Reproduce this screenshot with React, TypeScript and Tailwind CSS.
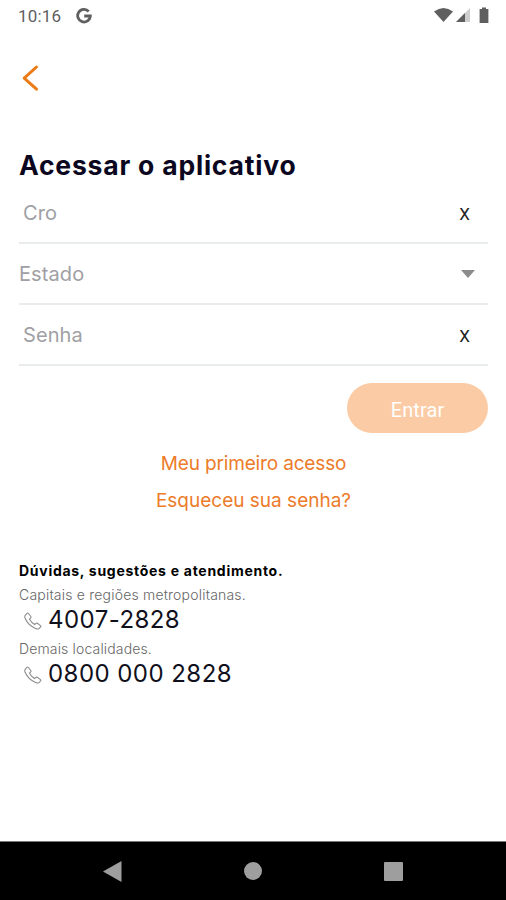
import type { ReactNode } from "react";

function StatusBar() {
  return (
    <header className="flex h-8 items-center justify-between pl-[18px] pr-[16px] text-[#5f5f5f]">
      <div className="flex items-center">
        <span className="w-[58px] font-['Roboto',sans-serif] text-[17px] leading-8 tracking-[0.2px]">10:16</span>
        <svg width="16" height="16" viewBox="0 0 16 16" fill="none" stroke="currentColor" strokeWidth="2.8">
          <path d="M12.7 3.5A6.3 6.3 0 1 0 14.3 8H8.2" />
        </svg>
      </div>
      <svg width="56" height="18" viewBox="0 0 56 18" fill="currentColor">
        <path d="M0 4.5Q9.5-2.5 19 4.5L9.5 15Z" />
        <path d="M36 1V15H22Z" fill="#cfcfcf" />
        <path d="M31 6V15H22Z" />
        <path d="M48 .5h4v1.5h2.4V16h-8.8V2H48Z" />
      </svg>
    </header>
  );
}

function Field({ label, inset, children }: { label: string; inset?: boolean; children: ReactNode }) {
  return (
    <div className="flex h-[61px] items-center justify-between border-b-2 border-[#e9ecec]">
      <span className={inset ? "pl-1 tracking-[0.1px]" : "tracking-[0.1px]"}>{label}</span>
      {children}
    </div>
  );
}

function Clear() {
  return (
    <button aria-label="Limpar" className="mr-[18px] mt-[2px] font-['Roboto',sans-serif] text-[17px] leading-6 text-[#222]">
      X
    </button>
  );
}

function Phone({ number }: { number: string }) {
  return (
    <div className="flex h-[26px] items-center pl-[5px]">
      <svg className="mr-[6px] mt-[2px]" width="18" height="18" viewBox="0 0 18 18" fill="none" stroke="#8c8c8c" strokeWidth="1.1">
        <path d="M1.2 3.3L3 1.3Q3.7.7 4.4 1.5L6.8 4.5Q7.3 5.2 6.7 5.9L5.5 7.2Q7.2 10.4 10.7 12.5L12 11.4Q12.7 10.8 13.4 11.3L16.5 13.6Q17.2 14.2 16.6 14.9L15 16.6Q13.8 17.5 11.6 16.5Q4 13.2 1 6Q.5 4.2 1.2 3.3Z" />
      </svg>
      <span className="whitespace-nowrap text-[24px] leading-[26px] tracking-[0.45px] text-[#10101c]">{number}</span>
    </div>
  );
}

export default function App() {
  return (
    <div className="flex h-[900px] w-[506px] flex-col bg-white font-['Inter',sans-serif]">
      <StatusBar />
      <main className="flex flex-1 flex-col pl-[19px] pr-[18px]">
        <button aria-label="Voltar" className="ml-[3px] mt-[32px] h-7 w-[18px]">
          <svg width="18" height="28" viewBox="0 0 18 28" fill="none" stroke="#ec7b16" strokeWidth="3" strokeLinecap="round" strokeLinejoin="round">
            <path d="M14.5 3L2.2 14.2L14.5 25.2" />
          </svg>
        </button>
        <h1 className="mt-[57px] h-[34px] whitespace-nowrap text-[26.5px] font-bold leading-[33px] tracking-[0.8px] text-[#0b0720]">Acessar o aplicativo</h1>
        <form className="flex flex-col text-[20px] text-[#a0a0a4]">
          <Field label="Cro" inset><Clear /></Field>
          <Field label="Estado">
            <svg className="mr-[13px]" width="14" height="8" viewBox="0 0 14 8" fill="#8b8b8b"><path d="M0 0H14L7 8Z" /></svg>
          </Field>
          <Field label="Senha" inset><Clear /></Field>
          <button type="button" className="mt-[17px] h-[50px] w-[141px] self-end rounded-full bg-[#facba4] pt-[3px] font-['Roboto',sans-serif] text-[20px] tracking-[0.1px] text-white">Entrar</button>
        </form>
        <nav className="mt-[12px] flex flex-col items-center text-[19px] text-[#ec7b2a]">
          <a className="h-[37px] leading-[37px] tracking-[-0.15px]">Meu primeiro acesso</a>
          <a className="h-[37px] leading-[37px]">Esqueceu sua senha?</a>
        </nav>
        <section className="mt-[40px] text-[14px] text-[#666]">
          <h2 className="h-6 whitespace-nowrap font-bold leading-6 tracking-[0.72px] text-black">Dúvidas, sugestões e atendimento.</h2>
          <p className="h-6 font-light leading-6 tracking-[0.2px]">Capitais e regiões metropolitanas.</p>
          <Phone number="4007-2828" />
          <p className="mt-1 h-6 font-light leading-6 tracking-[0.15px]">Demais localidades.</p>
          <Phone number="0800 000 2828" />
        </section>
      </main>
      <footer className="flex h-[59px] items-center border-t border-[#777] bg-black pl-[103px]">
        <svg width="19" height="21" viewBox="0 0 19 21" fill="#9e9e9e"><path d="M18.5 0V21L0 10.5Z" /></svg>
        <div className="ml-[122px] size-[18px] rounded-full bg-[#9e9e9e]" />
        <div className="ml-[122px] size-[19px] rounded-[1px] bg-[#9e9e9e]" />
      </footer>
    </div>
  );
}
